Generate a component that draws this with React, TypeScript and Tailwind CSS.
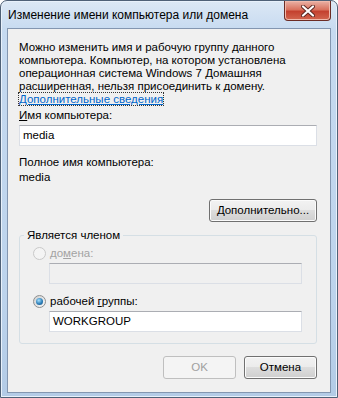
import React from "react";

const font = { fontFamily: '"Liberation Sans", Arial, sans-serif' };

const Btn = ({ children, disabled, w }: { children: React.ReactNode; disabled?: boolean; w: string }) => (
  <div
    className={
      "flex h-[23px] items-center justify-center rounded-[3px] border text-[11.5px] " +
      w +
      (disabled
        ? " border-[#bfbfbf] bg-[#f4f4f4] text-[#a0a0a0]"
        : " border-[#707070] bg-[linear-gradient(#f2f2f2,#ebebeb_50%,#dddddd_50%,#cfcfcf)] text-black shadow-[inset_0_0_0_1px_#fbfbfb]")
    }
  >
    {children}
  </div>
);

const Field = ({ value, disabled, w }: { value?: string; disabled?: boolean; w: string }) => (
  <div
    className={
      "flex h-[21px] items-center border border-[#dbdfe6] border-t-[#abadb3] px-[3px] text-[11.5px] text-black " +
      w +
      (disabled ? " bg-[#f0f0f0]" : " bg-white")
    }
  >
    {value}
  </div>
);

const Radio = ({ checked, disabled }: { checked?: boolean; disabled?: boolean }) => (
  <span
    className={
      "flex h-[13px] w-[13px] items-center justify-center rounded-full border " +
      (disabled
        ? "border-[#c9c9c9] bg-[#f4f4f4]"
        : "border-[#8e8f8f] bg-[linear-gradient(135deg,#d0d0d0,#f8f8f8)]")
    }
  >
    {checked && (
      <span className="h-[7px] w-[7px] rounded-full bg-[radial-gradient(circle_at_40%_35%,#a6e1ff,#2e7fb8_55%,#174d80)]" />
    )}
  </span>
);

export default function App() {
  return (
    <div style={font} className="h-[398px] w-[338px] bg-white">
      <div className="flex h-[398px] w-[338px] flex-col rounded-t-[7px] border border-[#4f6177] bg-[linear-gradient(to_bottom,#dce8f5,#c6daf0_30px,#bcd3ec_300px,#b3cbe6)] shadow-[inset_0_0_0_1px_#e8f1fb]">
        <div className="flex h-[27px] items-start">
          <span className="ml-[7px] mt-[7px] text-[12px] leading-[15px] text-black">
            Изменение имени компьютера или домена
          </span>
          <div className="ml-auto mr-[6px] flex h-[20px] w-[47px] items-center justify-center rounded-b-[4px] border border-t-0 border-[#6b2c25] bg-[linear-gradient(#eab2a6,#d9735f_45%,#c4412f_55%,#d2664f)] shadow-[inset_0_0_0_1px_#f0b9ab]">
            <svg width="14" height="12" viewBox="0 0 14 12">
              <path d="M2 1.5 L12 10.5 M12 1.5 L2 10.5" stroke="#5a2620" strokeWidth="4" strokeLinecap="round" />
              <path d="M2 1.5 L12 10.5 M12 1.5 L2 10.5" stroke="#ffffff" strokeWidth="2.2" strokeLinecap="round" />
            </svg>
          </div>
        </div>
        <div className="mx-[6px] flex h-[365px] flex-col border border-[#8396b0] bg-[#f0f0f0] pl-[11px] pr-[12px] pt-[12px] text-[11.5px] text-black">
          <div className="leading-[13px]">
            <div>Можно изменить имя и рабочую группу данного</div>
            <div>компьютера. Компьютер, на котором установлена</div>
            <div>операционная система Windows 7 Домашняя</div>
            <div>расширенная, нельзя присоединить к домену.</div>
            <div>
              <span className="text-[#0066cc] underline outline outline-1 outline-dotted outline-[#333]">
                Дополнительные сведения
              </span>
            </div>
          </div>
          <div className="mt-[3px] leading-[13px]">
            <u>И</u>мя компьютера:
          </div>
          <Field value="media" w="mt-[3px] w-[298px]" />
          <div className="mt-[10px] leading-[13px]">Полное имя компьютера:</div>
          <div className="mt-[2px] leading-[13px]">media</div>
          <div className="mt-[15px] flex justify-end pr-[1px]">
            <Btn w="w-[108px]">
              <u>Д</u>ополнительно...
            </Btn>
          </div>
          <fieldset className="mt-[6px] h-[116px] w-[298px] rounded-[3px] border border-[#d5dfe5] px-[13px]">
            <legend className="-ml-[9px] px-[3px] leading-[14px]">Является членом</legend>
            <div className="mt-[5px] flex items-center gap-[4px] text-[#a3a3a3]">
              <Radio disabled />
              <span className="leading-[13px]">
                до<u>м</u>ена:
              </span>
            </div>
            <Field disabled w="ml-[16px] mt-[3px] w-[253px]" />
            <div className="mt-[11px] flex items-center gap-[4px]">
              <Radio checked />
              <span className="leading-[13px]">
                рабочей <u>г</u>руппы:
              </span>
            </div>
            <Field value="WORKGROUP" w="ml-[16px] mt-[3px] w-[253px]" />
          </fieldset>
          <div className="mt-[12px] flex justify-end gap-[8px] pr-[1px]">
            <Btn disabled w="w-[73px]">OK</Btn>
            <Btn w="w-[73px]">Отмена</Btn>
          </div>
        </div>
      </div>
    </div>
  );
}
